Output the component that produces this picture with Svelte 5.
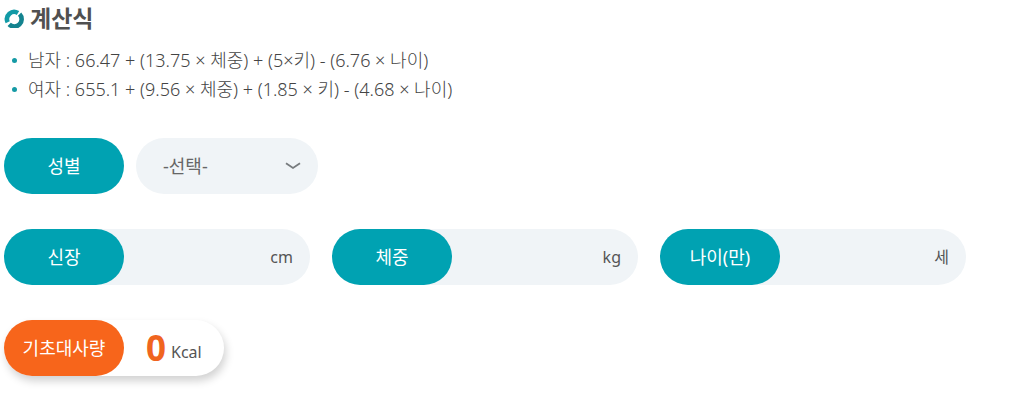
<script>
  let gender = $state('');
  let height = $state('');
  let weight = $state('');
  let age = $state('');

  const result = $derived.by(() => {
    const h = Number(height);
    const w = Number(weight);
    const a = Number(age);
    if (!gender || !h || !w || !a) return 0;
    return gender === 'm'
      ? Math.round(66.47 + 13.75 * w + 5 * h - 6.76 * a)
      : Math.round(655.1 + 9.56 * w + 1.85 * h - 4.68 * a);
  });
</script>

<main>
  <h2>
    <svg viewBox="0 0 20 20" aria-hidden="true">
      <g fill="none" stroke-width="4.6">
        <path d="M3.7 14.2A7.2 7.2 0 0 1 14 5" stroke="#129aa6" />
        <path d="M15.6 6.2A7.2 7.2 0 0 1 5.2 16.3" stroke="#14838f" />
      </g>
    </svg>
    계산식
  </h2>
  <ul>
    <li>남자 : 66.47 + (13.75 × 체중) + (5×키) - (6.76 × 나이)</li>
    <li>여자 : 655.1 + (9.56 × 체중) + (1.85 × 키) - (4.68 × 나이)</li>
  </ul>

  <form>
    <div class="row choice">
      <label class="pill" for="gender">성별</label>
      <div class="select">
        <select id="gender" bind:value={gender}>
          <option value="">-선택-</option>
          <option value="m">남자</option>
          <option value="f">여자</option>
        </select>
        <svg viewBox="0 0 16 8" aria-hidden="true">
          <path d="M1 1.2L8 6L15 1.2" fill="none" stroke="#777b7e" stroke-width="1.8" />
        </svg>
      </div>
    </div>

    <div class="row fields">
      <div class="field">
        <label class="pill" for="height">신장</label>
        <input id="height" inputmode="decimal" bind:value={height} />
        <span class="unit">cm</span>
      </div>
      <div class="field">
        <label class="pill" for="weight">체중</label>
        <input id="weight" inputmode="decimal" bind:value={weight} />
        <span class="unit">kg</span>
      </div>
      <div class="field">
        <label class="pill" for="age">나이(만)</label>
        <input id="age" inputmode="numeric" bind:value={age} />
        <span class="unit">세</span>
      </div>
    </div>

    <div class="result">
      <span class="pill orange">기초대사량</span>
      <output for="gender height weight age">{result}</output>
      <span class="kcal">Kcal</span>
    </div>
  </form>
</main>

<style>
  :global(body) {
    margin: 0;
    background: #fff;
  }
  main {
    padding: 4px 4px 24px;
    color: #555;
    font: 16px/28px 'Noto Sans', 'Noto Sans CJK KR', sans-serif;
  }
  h2 {
    display: flex;
    align-items: center;
    gap: 6px;
    margin: 0;
    font-size: 23px;
    line-height: 28px;
    color: #505050;
  }
  h2 svg {
    width: 20px;
    height: 20px;
  }
  ul {
    margin: 14px 0 34px;
    padding: 0;
    list-style: none;
  }
  li {
    display: flex;
    align-items: center;
    gap: 11px;
    padding-left: 8px;
    color: #444;
    font-size: 18px;
    font-weight: 300;
    line-height: 29px;
  }
  li::before {
    content: '';
    width: 5px;
    height: 5px;
    border-radius: 50%;
    background: #159aa5;
  }
  form {
    display: flex;
    flex-direction: column;
    align-items: flex-start;
    gap: 35px;
  }
  .row {
    display: flex;
    align-items: center;
  }
  .choice {
    gap: 12px;
  }
  .fields {
    width: 100%;
    flex-wrap: wrap;
    gap: 22px;
  }
  .pill {
    flex: none;
    display: flex;
    align-items: center;
    justify-content: center;
    width: 120px;
    height: 56px;
    border-radius: 28px;
    background: #00a2b2;
    color: #fff;
    font-size: 18px;
  }
  .select {
    display: grid;
    align-items: center;
    width: 182px;
  }
  .select select,
  .select svg {
    grid-area: 1 / 1;
  }
  .select select {
    appearance: none;
    width: 100%;
    height: 56px;
    padding: 0 27px;
    border: 0;
    border-radius: 28px;
    background: #f0f4f7;
    color: #666;
    font: inherit;
    font-size: 18px;
  }
  .select svg {
    justify-self: end;
    width: 16px;
    height: 8px;
    margin-right: 17px;
    pointer-events: none;
  }
  .field {
    display: flex;
    align-items: center;
    flex: 0 1 306px;
    min-width: 240px;
    border-radius: 28px;
    background: #f0f4f7;
  }
  .field input {
    flex: 1;
    min-width: 0;
    height: 56px;
    padding: 0 10px;
    border: 0;
    background: none;
    color: inherit;
    font: inherit;
    text-align: right;
    outline: none;
  }
  .unit {
    padding-right: 17px;
  }
  .result {
    display: flex;
    align-items: center;
    padding-right: 22px;
    border-radius: 28px;
    background: #fff;
    box-shadow: 2px 5px 8px rgba(0, 0, 0, 0.18);
  }
  .orange {
    background: #f7651b;
  }
  output {
    margin: 0 5px 0 22px;
    color: #f0651f;
    font-size: 35px;
    font-weight: 700;
  }
  .kcal {
    padding-top: 8px;
  }
</style>
